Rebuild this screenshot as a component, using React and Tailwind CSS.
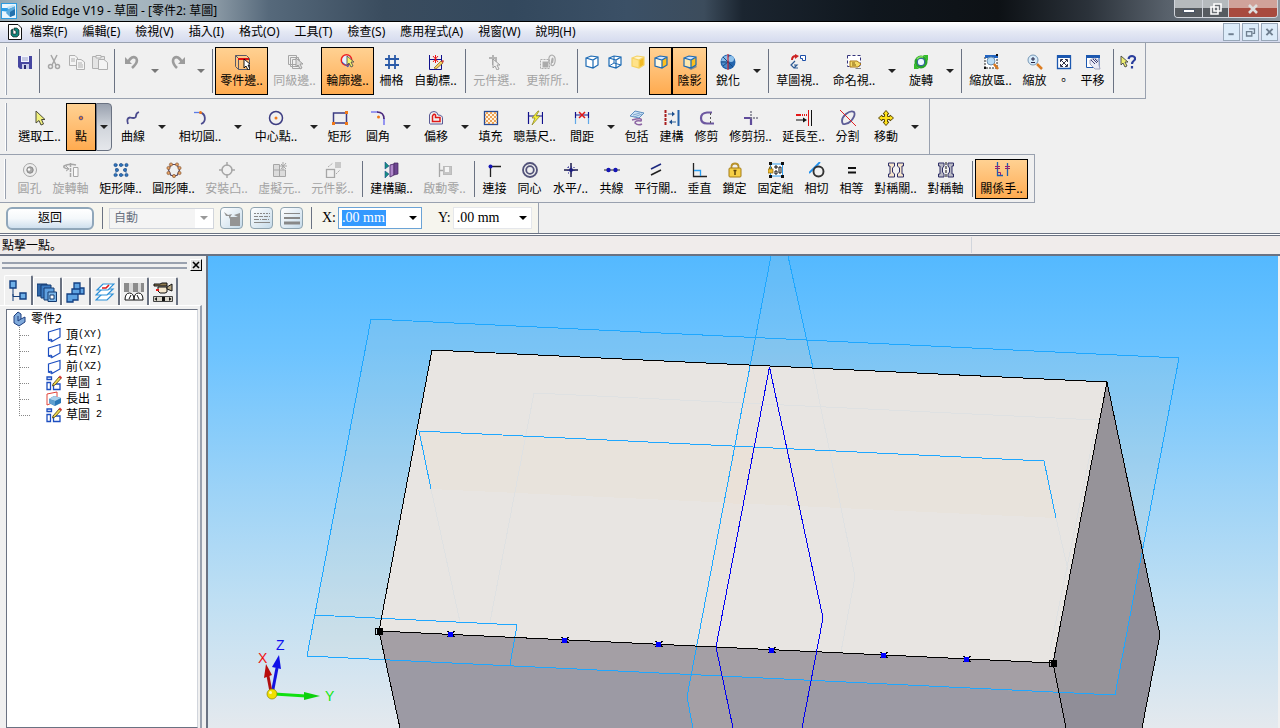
import { useState } from 'react';

const GRAY = '#a6a6a6';
const NAVY = '#10108c';
const BLUE = '#1f5fae';

const CubeIcon = ({ front = '#fff', side = '#fff', top = '#fff', stroke = '#1c6ab4', hidden = false, shadow = false }) => (
  <>
    {shadow && <path d="M1 11 L9 16 L15 13 L13 10Z" fill="#8a8a8a" />}
    <path d="M2 4 L9 6 L9 14 L2 12Z" fill={front} />
    <path d="M9 6 L14 3 L14 11 L9 14Z" fill={side} />
    <path d="M2 4 L7 2 L14 3 L9 6Z" fill={top} />
    <path d="M2 4 L7 2 L14 3 L14 11 L9 14 L2 12Z M2 4 L9 6 L14 3 M9 6 V14" fill="none" stroke={stroke} strokeWidth="1.2" />
    {hidden && <path d="M7 2 V9 L2 12 M7 9 L14 11" fill="none" stroke={stroke} />}
  </>
);

const Cursor = ({ x = 0, y = 0, fill = '#fff', stroke = '#000' }) => (
  <path
    d={`M${x} ${y} v9 l2 -2 l2 4 l2 -1 l-2 -4 h3Z`}
    fill={fill}
    stroke={stroke}
    strokeWidth="0.9"
  />
);

const icons = {
  save: (
    <>
      <path d="M1 2 H15 V15 H3 L1 13Z" fill="#4646a0" />
      <path d="M4 2 H12 V8 H4Z" fill="#f2f4ff" />
      <path d="M5 4 H11 M5 6 H11" stroke="#9aa0c8" />
      <path d="M5 10 H12 V15 H5Z" fill="#c8cce8" />
      <path d="M7 11 H9 V15 H7Z" fill="#28286e" />
    </>
  ),
  cut: (
    <g fill="none" stroke={GRAY} strokeWidth="1.5">
      <path d="M5 1 L10 11 M11 1 L6 11" />
      <circle cx="4.5" cy="12.500" r="2" />
      <circle cx="11.500" cy="12.500" r="2" />
    </g>
  ),
  copy: (
    <g fill="#f4f4f4" stroke="#b0b0b0">
      <path d="M0.500 1.500 H6 L8.500 4 V11.500 H0.500Z" />
      <path d="M7.500 5.500 H12 L15.500 8 V15.500 H7.500Z" />
      <path d="M2 5 H6 M2 7 H6 M9 9 H13 M9 11 H14 M9 13 H14" />
    </g>
  ),
  paste: (
    <g fill="#f4f4f4" stroke="#b0b0b0">
      <path d="M0.500 2.500 H12.500 V14.500 H0.500Z" fill="#e4e4e4" />
      <path d="M4 1.500 H9 V4 H4Z" />
      <path d="M6.500 5.500 H12 L15.500 8.500 V15.500 H6.500Z" />
    </g>
  ),
  undo: (
    <>
      <path d="M4 8 Q8 1 12 4 Q15 8 8 14" fill="none" stroke="#9c9c9c" strokeWidth="2.600" />
      <path d="M1 3 V10 H8Z" fill="#9c9c9c" />
    </>
  ),
  redo: (
    <>
      <path d="M12 8 Q8 1 4 4 Q1 8 7 14" fill="none" stroke="#9c9c9c" strokeWidth="2.600" />
      <path d="M15 3 V10 H8Z" fill="#9c9c9c" />
    </>
  ),
  partEdge: (
    <>
      <path d="M1.500 1.500 H12.500 L15.500 4.500 V15.500 H4.500 L1.500 12.500Z M4.500 4.500 V15.500 M1.500 1.500 L4.500 4.500" fill="none" stroke="#5a5a66" />
      <path d="M4 5 H15" stroke="#e01010" strokeWidth="2" />
      <Cursor x={10} y={5} />
    </>
  ),
  peerEdge: (
    <g fill="none" stroke={GRAY}>
      <path d="M1.500 1.500 H9.500 V10.500 H1.500Z M3.500 3.500 H11.500 V12.500 H3.500Z M5.500 5.500 H12.500 V14.500 H5.500Z" />
      <Cursor x={9} y={4} fill="#ddd" stroke="#999" />
    </g>
  ),
  profileEdge: (
    <>
      <circle cx="6.500" cy="6" r="5.200" fill="#e6f2ff" stroke="#e22" strokeWidth="1.500" />
      <path d="M2 8 L8 13 L9 5" fill="none" stroke="#3858b8" />
      <Cursor x={7} y={2} fill="#f3f36a" stroke="#555" />
    </>
  ),
  grid: <path d="M5 1 V15 M11 1 V15 M1 5 H15 M1 11 H15" stroke="#2a5aa8" strokeWidth="1.800" />,
  autoDim: (
    <>
      <path d="M1.500 1 V15.500 H13.500 V1 M1 5.500 H14" fill="none" stroke={NAVY} />
      <path d="M5 2 L10 8 M10 2 L5 8 M7.500 1 V9" stroke="#e11" />
      <path d="M6 14 L13 7 L15 9 L8 15Z" fill="#f5cf62" stroke="#7b5514" strokeWidth="0.700" />
      <path d="M13 7 l2 2 l1 -2 l-1 -1Z" fill="#d23c3c" />
    </>
  ),
  pickPart: (
    <>
      <path d="M6 1 V11 M2 4 H10 M9 3 V8" fill="none" stroke="#b4b4b4" strokeWidth="2" />
      <Cursor x={6} y={5} fill="#eee" stroke="#999" />
    </>
  ),
  refresh: (
    <g fill="none" stroke="#adadad">
      <path d="M0.500 5.500 H9.500 V14.500 H0.500Z" strokeDasharray="2 1" />
      <rect x="3" y="8" width="5" height="5" fill="#aaa" />
      <path d="M9 9 Q8 1 12 1 Q16 2 15 8 Q14 13 11 11 L12 5 Q13 3 13 6 L12.500 9" strokeWidth="1.200" />
    </g>
  ),
  cubeWire: <CubeIcon />,
  cubeHidden: <CubeIcon hidden />,
  cubeShade: <CubeIcon front="#ffe28a" side="#f2ba26" top="#fff4cc" stroke="#f5d263" />,
  cubeEdge: <CubeIcon front="#fff7e0" side="#ffbf1c" top="#d5e8ff" />,
  cubeShadow: <CubeIcon front="#fbe7b0" side="#ffbf1c" top="#cfe4ff" shadow />,
  sharpen: (
    <>
      <circle cx="8" cy="8" r="7.500" fill="#2465ae" />
      <circle cx="11" cy="5" r="3" fill="#8fc2ec" />
      <path d="M8 1 L3 3 L1 7 L8 8Z" fill="#8bbce8" />
      <path d="M1 7 L8 8 V15 L3 12Z" fill="#4f8cc8" />
      <path d="M3 3 L8 8 M1 8 H8 L3 12 M8 8 L13 13" stroke="#174b86" fill="none" />
      <path d="M8 0 V16" stroke="#e01515" />
    </>
  ),
  sketchView: (
    <>
      <path d="M2 6 Q2 2 6 2" fill="none" stroke="#c22" strokeWidth="2" />
      <path d="M5 0 L9 2 L5 5Z" fill="#c22" />
      <path d="M10.500 1.500 H15.500 V6.500 H12.500 V4.500 H10.500Z" fill="#fff" stroke="#1c4ea8" />
      <path d="M5 7 L1 11 L4 14 L7 11 L4 11 M4 14 H8" fill="none" stroke="#2c5a94" strokeWidth="1.200" />
    </>
  ),
  namedView: (
    <>
      <path d="M1.500 1.500 H14.500 V12.500 H1.500Z" fill="#fff" stroke="#33337c" strokeDasharray="3 2" />
      <path d="M4 7 H11 L15 10 L12 13 H4Z" fill="#f5dc68" stroke="#a6741b" />
      <path d="M6 9 H9 M6 11 H10" stroke="#805a10" />
      <path d="M10 14 H15 V15 H9Z" fill="#888" />
    </>
  ),
  rotate: (
    <>
      <circle cx="8" cy="8" r="5" fill="#eef8ff" stroke="#2aa52c" strokeWidth="3" />
      <circle cx="8" cy="8" r="3.800" fill="#eef8ff" stroke="#1b5596" />
      <path d="M10 1 L15 1 L15 7Z M6 15 L1 15 L1 9Z" fill="#35bc2c" />
      <path d="M4 5 Q6 2 10 3" fill="none" stroke="#84e35e" strokeWidth="1.500" />
    </>
  ),
  zoomArea: (
    <>
      <path d="M2 3 V14 H14 V3" fill="#fff" stroke="#222" strokeDasharray="2 1" />
      <path d="M2 1 H15 V4 H2Z" fill="#2264c0" />
      <circle cx="8" cy="7" r="4" fill="#b9dcf6" stroke="#6d8fae" />
      <path d="M11 10 L15 15" stroke="#d9781e" strokeWidth="2.500" />
      <path d="M1 13 H3 V15 H1Z M13 0 H15 V2 H13Z" fill="#111" />
    </>
  ),
  zoom: (
    <>
      <circle cx="6" cy="6" r="5" fill="#d8ecfb" stroke="#7697b5" />
      <path d="M4 5 H8 M6 3 V7 M4 8.500 H8" stroke="#224" />
      <path d="M10 10 L15 15" stroke="#dc7d22" strokeWidth="2.500" />
    </>
  ),
  fit: (
    <>
      <path d="M1.500 2 H14.500 V14.500 H1.500Z" fill="#fff" stroke="#1c58b0" strokeWidth="1.300" />
      <path d="M1 1 H15 V4 H1Z" fill="#1c58b0" />
      <path d="M5 6 L11 12 M11 6 L5 12 M4.500 8 V5.500 H7 M9 5.500 H11.500 V8 M4.500 10 V12.500 H7 M9 12.500 H11.500 V10" fill="none" stroke="#33334a" />
    </>
  ),
  pan: (
    <>
      <path d="M1.500 1.500 H14 V13.500 H1.500Z" fill="#fff" stroke="#1c58b0" />
      <path d="M1 1 H15 V4 H1Z" fill="#1c58b0" />
      <path d="M5 6 L7 5 L10 4 L14 7 L14 11 L15 15 H10 L5 10Z" fill="#e9eaf6" stroke="#8f93b4" strokeWidth="0.800" />
      <path d="M6 6 L10 10 M8 5 L12 9 M10 5 L13 8" stroke="#3d4075" />
    </>
  ),
  help: (
    <>
      <Cursor x={1} y={2} fill="#eeee70" stroke="#444" />
      <path d="M8.500 5 Q9 2 12 2 Q15.500 2.500 15 5.500 Q12 8 12 10 M12 12 V14.500" fill="none" stroke="#2a3e9c" strokeWidth="2.200" />
    </>
  ),
  select: <path d="M4 1 V13 L7 10.500 L9 15 L11.500 14 L9.500 9.500 H13Z" fill="#f0f07c" stroke="#4a4a3a" />,
  point: <circle cx="8" cy="8" r="1.800" fill="#e8772c" stroke="#54548c" />,
  curve: <path d="M3 14 Q1 8 5 7.500 Q11 9 11 6 Q11 3 14 2" fill="none" stroke="#4b4b8e" strokeWidth="1.800" />,
  tangentArc: (
    <>
      <path d="M2 2.500 H9" stroke="#5b7be6" strokeWidth="1.300" />
      <path d="M8 2.500 A6 6 0 0 1 9 14" fill="none" stroke="#4b4b8e" strokeWidth="1.800" />
      <circle cx="8.500" cy="2.500" r="1.500" fill="#f07818" />
    </>
  ),
  circle: (
    <>
      <circle cx="8" cy="8" r="6.500" fill="none" stroke="#3d3d82" strokeWidth="1.500" />
      <circle cx="8" cy="8" r="1.500" fill="#f07818" />
    </>
  ),
  rect: (
    <>
      <rect x="1.500" y="3" width="13" height="10" fill="none" stroke="#3d3d82" strokeWidth="1.500" />
      <path d="M0 12 h3 v3 h-3Z M13 12 h3 v3 h-3Z M13 1 h3 v3 h-3Z" fill="#f07818" />
    </>
  ),
  fillet: (
    <>
      <path d="M1 2 H8 M14 8 V15" stroke="#7d7df0" strokeWidth="1.600" />
      <path d="M7 2 Q14 2 14 9" fill="none" stroke="#4b2a7e" strokeWidth="1.600" />
      <circle cx="8.500" cy="7" r="1.500" fill="#f07818" />
    </>
  ),
  offset: (
    <g fill="none">
      <path d="M1.500 13.500 V5 Q2 1.500 6 1.500 Q9.500 1.500 10 5 Q15 5 14.500 9 V14 H2Z" stroke="#5a5a96" />
      <path d="M4.500 11.500 V6 Q6 3 7.500 5 V7.500 H12 V11.500Z" stroke="#e01818" strokeWidth="1.500" />
    </g>
  ),
  fill: (
    <>
      <rect x="1.500" y="1.500" width="13" height="13" fill="#fff3df" stroke="#284c96" strokeWidth="1.300" />
      <path d="M2 5 L5 2 M2 9 L9 2 M2 13 L13 2 M5 14 L14 5 M9 14 L14 9 M11 2 L14 5 M7 2 L14 9 M3 2 L14 13 M2 5 L11 14 M2 9 L7 14" stroke="#e99a48" strokeWidth="0.900" />
    </>
  ),
  smartDim: (
    <>
      <path d="M1.500 2 V14 M15.500 2 V14 M1 6 H16" stroke={NAVY} strokeWidth="1.200" />
      <path d="M11 1 L5 8 L8 8 L5 15 L13 6 L9 6 L12 1Z" fill="#f4ef3a" stroke="#85801d" strokeWidth="0.700" />
    </>
  ),
  distance: (
    <>
      <path d="M1.500 2 V8 M14.500 2 V8 M1 5 H15" stroke={NAVY} strokeWidth="1.200" />
      <path d="M1.500 8 V14 M14.500 8 V14" stroke="#60a8e8" strokeWidth="1.200" />
      <path d="M5 2 L11 8 M11 2 L5 8" stroke="#e11818" strokeWidth="1.500" />
    </>
  ),
  include: (
    <>
      <path d="M1 6 L6 1 L15 3 L10 8Z" fill="#cde2f5" stroke="#5d8fc0" />
      <path d="M4 5 L11 3 M5 7 L13 4" stroke="#7fa8d0" />
      <path d="M3 10 Q14 7 12 11 Q6 10 6 13 Q9 16 13 14" fill="none" stroke="#8d65a4" strokeWidth="1.500" />
    </>
  ),
  construct: (
    <>
      <path d="M1.500 0 V16" stroke="#a81e1e" strokeWidth="2" strokeDasharray="3 1" />
      <path d="M14.500 0 V16" stroke="#2462aa" strokeWidth="2" />
      <path d="M4 4 H9 M12 12 H7" stroke="#2a6098" />
      <path d="M8 1.500 L11 4 L8 6.500Z M8 9.500 L5 12 L8 14.500Z" fill="#1d4e8c" />
    </>
  ),
  trim: (
    <>
      <path d="M13 2.500 H8 Q2 3 2 8 Q2 13.500 8 13.500 H15" fill="none" stroke="#6d58a0" strokeWidth="2.200" />
      <path d="M11.500 3 V14" stroke="#555" strokeDasharray="2 2" />
    </>
  ),
  trimCorner: (
    <>
      <path d="M1 8 H8 V15" fill="none" stroke="#5f4b9a" strokeWidth="2.200" />
      <path d="M8 1 V8 H15" fill="none" stroke="#7b7b8a" strokeWidth="1.500" strokeDasharray="2 1" />
    </>
  ),
  extend: (
    <>
      <path d="M0 5 H5" stroke="#e51616" strokeWidth="2" />
      <path d="M6 5 H12" stroke="#e51616" strokeWidth="2" strokeDasharray="1 1" />
      <path d="M12.500 0 V16" stroke="#d11" />
      <path d="M15.500 0 V16 M0 10 H8" stroke="#111" />
      <path d="M7 7.500 L11 10 L7 12.500Z" fill="#111" />
    </>
  ),
  split: (
    <>
      <path d="M3 14 Q0 9 6 4 Q11 0 14 2 Q16 5 11 11 Q7 15 3 14Z" fill="none" stroke="#5d5d96" strokeWidth="1.800" />
      <path d="M0 0 L16 16" stroke="#e22222" />
    </>
  ),
  move: (
    <path
      d="M8 0.500 L11 4 H9.500 V6.500 H12 V5 L15.500 8 L12 11 V9.500 H9.500 V12 H11 L8 15.500 L5 12 H6.500 V9.500 H4 V11 L0.500 8 L4 5 V6.500 H6.500 V4 H5Z"
      fill="#ffe21d"
      stroke="#5e4a0a"
    />
  ),
  hole: (
    <>
      <circle cx="8" cy="8" r="6.500" fill="#efefef" stroke={GRAY} />
      <circle cx="8" cy="8" r="3.200" fill="#aaa" stroke="#888" />
      <circle cx="7" cy="7.500" r="1.200" fill="#fff" />
    </>
  ),
  axis: (
    <g fill="none" stroke={GRAY}>
      <path d="M7.500 1 V16" strokeDasharray="4 1" strokeWidth="1.500" />
      <path d="M5 7 Q0 6 1 4 Q6 1 13 3" strokeWidth="1.500" />
      <path d="M10.500 5.500 H15 V14.500 H10.500Z" fill="#f8f8f8" />
      <path d="M3 4 L6 7 L3 9" />
    </g>
  ),
  rectPattern: (
    <>
      <path d="M3 3 H13 M3 13 H13 M3 3 V13 M13 3 V13" stroke="#5b88bd" strokeDasharray="2 1" />
      {[[2.500, 3], [8, 3], [13.500, 3], [4, 8], [12, 8], [2.500, 13], [8, 13], [13.500, 13]].map(([x, y]) => (
        <circle key={`${x}-${y}`} cx={x} cy={y} r="1.600" fill="#2e74bd" stroke="#12427c" strokeWidth="0.600" />
      ))}
    </>
  ),
  circPattern: (
    <>
      <path d="M5 2.500 H11 L13.500 8 L11 13.500 H5 L2.500 8Z" fill="none" stroke="#554a6b" strokeWidth="1.200" />
      {[[5, 2.500], [11, 2.500], [2.500, 6], [13.500, 6], [2.500, 11], [13.500, 11], [8, 14]].map(([x, y]) => (
        <circle key={`${x}-${y}`} cx={x} cy={y} r="1.600" fill="#e5a163" stroke="#784622" strokeWidth="0.600" />
      ))}
    </>
  ),
  boss: (
    <g fill="none" stroke={GRAY} strokeWidth="1.500">
      <circle cx="8" cy="8" r="5" />
      <path d="M8 0 V4 M8 12 V16 M0 8 H4 M12 8 H16" />
    </g>
  ),
  virtual: (
    <g stroke={GRAY} fill="#dcdcdc">
      <path d="M1.500 2.500 H7.500 V8 H13.500 V14.500 H1.500Z M1.500 8 H7.500 V14" />
      <path d="M11 0 V8 M8 4 H15 M9 2 L14 7 M14 1 L9 7" />
    </g>
  ),
  compCopy: (
    <>
      <rect x="1.500" y="7.500" width="8" height="8" fill="none" stroke={GRAY} strokeWidth="1.300" />
      <rect x="10" y="0" width="6" height="6" fill="#c8c8c8" />
      <path d="M3 5 L8 1 M11 12 L15 8" stroke="#aaa" strokeDasharray="2 1" />
    </>
  ),
  buildShow: (
    <>
      <path d="M1 0 L5 4 L1 7Z M1 9 L5 12 L1 16Z" fill="#15907f" stroke="#1c4e90" strokeWidth="0.600" />
      <path d="M6 3 L10 2 V13 L6 15Z" fill="#b188cc" stroke="#5b3a78" />
      <path d="M10 1 H14 V12 L10 13Z" fill="#6d4591" stroke="#43275c" strokeWidth="0.700" />
    </>
  ),
  activate: (
    <>
      <path d="M2.500 1 V15 M3 8.500 H7" stroke={GRAY} strokeWidth="1.300" />
      <rect x="6.500" y="4.500" width="8" height="8" fill="#c5c5c5" stroke="#bbb" />
      <rect x="8" y="5" width="4" height="5" fill="#f5f5f5" />
    </>
  ),
  connect: (
    <>
      <path d="M3.500 15 V4.500 H14" fill="none" stroke="#222" strokeWidth="1.300" />
      <circle cx="3.500" cy="4.500" r="2" fill="#1515b5" />
    </>
  ),
  concentric: (
    <g fill="none" stroke="#53537a" strokeWidth="1.800">
      <circle cx="8" cy="8" r="7" />
      <circle cx="8" cy="8" r="3.800" />
    </g>
  ),
  horiz: (
    <>
      <path d="M1 8 H15 M8 1 V15" stroke="#1b1b4c" strokeWidth="1.500" />
      <path d="M5 5 V11 M11 5 V11 M5 5 H11 M5 11 H11" stroke="#1b1b8c" strokeDasharray="1 2" />
      <circle cx="8" cy="8" r="2" fill="#1d1d80" />
    </>
  ),
  collinear: (
    <>
      <path d="M0 8 H16" stroke="#222" />
      <circle cx="4.500" cy="8" r="2.200" fill="#1515b5" />
      <circle cx="11.500" cy="8" r="2.200" fill="#1515b5" />
    </>
  ),
  parallel: (
    <>
      <path d="M3 7 L13 2" stroke="#1e2a80" strokeWidth="1.600" />
      <path d="M3 13 L13 8" stroke="#222" strokeWidth="1.600" />
    </>
  ),
  perp: (
    <>
      <path d="M1.500 1 V14.500 H15" fill="none" stroke="#222" strokeWidth="1.300" />
      <path d="M2 8.500 H8.500 V14" fill="none" stroke="#2a9df0" strokeWidth="1.300" />
    </>
  ),
  lock: (
    <>
      <path d="M4.500 7 V4 Q5 1.500 8 1.500 Q11 1.500 11.500 4 V7" fill="none" stroke="#b8922c" strokeWidth="1.800" />
      <rect x="2" y="6" width="12" height="9" rx="1" fill="#f6cf45" stroke="#a47d18" />
      <path d="M6.500 8.500 H9.500 M8 8.500 V13" stroke="#5c430a" strokeWidth="1.500" />
    </>
  ),
  fixGroup: (
    <>
      <rect x="2.500" y="2" width="12" height="12" fill="#fff" stroke="#2a9df0" />
      <path d="M1 0 h3 v3 h-3Z M13 0 h3 v3 h-3Z M1 13 h3 v3 h-3Z M13 13 h3 v3 h-3Z" fill="#111" />
      <path d="M1.500 7 V5 Q2.500 3.500 3.500 5 V7" fill="none" stroke="#8c6a10" />
      <rect x="0" y="7" width="5" height="4" fill="#eebb30" stroke="#8c6a10" strokeWidth="0.700" />
      <path d="M7 4 h2 v2 h-2Z M11 5 h2 v6 h-2Z M7 9 h2 v3 h-2Z" fill="none" stroke="#111" />
    </>
  ),
  tangent: (
    <>
      <path d="M0 11 L11 0" stroke="#1c8fee" strokeWidth="1.800" />
      <circle cx="9.500" cy="9.500" r="5" fill="none" stroke="#333" strokeWidth="1.900" />
    </>
  ),
  equal: <path d="M4 6 H12 M4 10.500 H12" stroke="#111" strokeWidth="2.200" />,
  symmetric: (
    <path d="M0.500 1 H6.500 V4 L4.500 6 V10 L6.500 12 V15 H0.500 V12 H2 V4 H0.500Z M15.500 1 H9.500 V4 L11.500 6 V10 L9.500 12 V15 H15.500 V12 H14 V4 H15.500Z" fill="#f5e4cb" stroke="#2e2e66" />
  ),
  symAxis: (
    <>
      <path d="M0.500 1 H6 V4 L4.500 6 V10 L6 12 V15 H0.500 V12 H2 V4 H0.500Z M15.500 1 H10 V4 L11.500 6 V10 L10 12 V15 H15.500 V12 H14 V4 H15.500Z" fill="#b9b9c4" stroke="#2e2e66" />
      <path d="M8 0 V16" stroke="#111" strokeDasharray="3 1" />
    </>
  ),
  relation: (
    <>
      <path d="M3.500 0 V13.500 H9 M13.500 1 V14" fill="none" stroke={BLUE} strokeWidth="1.300" />
      <path d="M1 4.500 H6 M1 6.500 H6 M11 4.500 H16 M11 6.500 H16 M4 10.500 H6.500 V13" fill="none" stroke="#a01f6c" />
    </>
  ),
};

const Icon = ({ name }) => (
  <svg className="w-4 h-4 shrink-0" viewBox="0 0 16 16" aria-hidden="true">
    {icons[name]}
  </svg>
);

const widths = {
  xs: ['w-[23px]', 'w-[30px]'],
  sm: ['w-[35px]', 'w-[42px]'],
  md: ['w-[47px]', 'w-[54px]'],
  lg: ['w-[53px]', 'w-[60px]'],
};

const Arrow = ({ color = '#222' }) => (
  <svg className="w-2 h-1 shrink-0" viewBox="0 0 8 4" aria-hidden="true">
    <path d="M0 0 H8 L4 4Z" fill={color} />
  </svg>
);

const ToolButton = ({ item, compact }) => {
  const { icon, label, size, drop, off, on, pill } = item;
  const width = pill ? widths.xs[1] : widths[size][drop ? 1 : 0];
  return (
    <>
      <button
        type="button"
        disabled={off}
        aria-label={label || icon}
        aria-pressed={on ? true : undefined}
        className={`flex flex-col items-center gap-[3px] shrink-0 border whitespace-nowrap ${width} ${
          compact ? 'h-10 pt-0.5' : 'h-12 pt-1.5'
        } ${on ? 'border-black bg-linear-to-b from-[#ffd192] to-[#ffab4f]' : 'border-transparent'} ${
          off ? 'text-[#a3a3a3]' : 'text-black'
        }`}
      >
        <Icon name={icon} />
        {label && <span className="leading-4">{label}</span>}
      </button>
      {drop && (
        <button
          type="button"
          aria-label={`${label || icon} menu`}
          className={`flex items-center justify-center w-4 shrink-0 h-12 ${
            pill ? 'border border-gray-500 rounded-r-sm bg-linear-to-b from-gray-400 via-gray-300 to-gray-200' : ''
          }`}
        >
          <Arrow color={off ? '#777' : '#222'} />
        </button>
      )}
    </>
  );
};

const Separator = () => (
  <div className="w-1.5 shrink-0 self-stretch flex justify-center py-0.5">
    <div className="w-px bg-gray-500" />
  </div>
);

const Toolbar = ({ items, compact, className }) => (
  <div role="toolbar" className={`flex w-fit pt-1 pb-[3px] pr-1.5 border-r border-r-gray-400 ${className}`}>
    <div className="w-0.5 ml-1 mr-1.5 shrink-0 border-l border-white border-r border-r-gray-400" />
    {items.map((item, i) =>
      item === '|' ? <Separator key={i} /> : <ToolButton key={i} item={item} compact={compact} />
    )}
  </div>
);

const mainTools = [
  { icon: 'save', size: 'xs' },
  '|',
  { icon: 'cut', size: 'xs', off: true },
  { icon: 'copy', size: 'xs', off: true },
  { icon: 'paste', size: 'xs', off: true },
  '|',
  { icon: 'undo', size: 'xs', off: true, drop: true },
  { icon: 'redo', size: 'xs', off: true, drop: true },
  '|',
  { icon: 'partEdge', label: '零件邊..', size: 'lg', on: true },
  { icon: 'peerEdge', label: '同級邊..', size: 'lg', off: true },
  { icon: 'profileEdge', label: '輪廓邊..', size: 'lg', on: true },
  { icon: 'grid', label: '柵格', size: 'sm' },
  { icon: 'autoDim', label: '自動標..', size: 'lg' },
  '|',
  { icon: 'pickPart', label: '元件選..', size: 'lg', off: true },
  { icon: 'refresh', label: '更新所..', size: 'lg', off: true },
  '|',
  { icon: 'cubeWire', size: 'xs' },
  { icon: 'cubeHidden', size: 'xs' },
  { icon: 'cubeShade', size: 'xs' },
  { icon: 'cubeEdge', size: 'xs', on: true },
  { icon: 'cubeShadow', label: '陰影', size: 'sm', on: true },
  { icon: 'sharpen', label: '銳化', size: 'sm', drop: true },
  '|',
  { icon: 'sketchView', label: '草圖視..', size: 'lg' },
  { icon: 'namedView', label: '命名視..', size: 'lg', drop: true },
  { icon: 'rotate', label: '旋轉', size: 'sm', drop: true },
  '|',
  { icon: 'zoomArea', label: '縮放區..', size: 'lg' },
  { icon: 'zoom', label: '縮放', size: 'sm' },
  { icon: 'fit', label: '。', size: 'xs' },
  { icon: 'pan', label: '平移', size: 'sm' },
  '|',
  { icon: 'help', size: 'xs' },
];

const drawTools = [
  { icon: 'select', label: '選取工..', size: 'lg' },
  { icon: 'point', label: '點', size: 'xs', on: true, drop: true, pill: true },
  { icon: 'curve', label: '曲線', size: 'sm', drop: true },
  { icon: 'tangentArc', label: '相切圓..', size: 'lg', drop: true },
  { icon: 'circle', label: '中心點..', size: 'lg', drop: true },
  { icon: 'rect', label: '矩形', size: 'sm' },
  { icon: 'fillet', label: '圓角', size: 'sm', drop: true },
  { icon: 'offset', label: '偏移', size: 'sm', drop: true },
  { icon: 'fill', label: '填充', size: 'sm' },
  { icon: 'smartDim', label: '聰慧尺..', size: 'lg' },
  { icon: 'distance', label: '間距', size: 'sm', drop: true },
  { icon: 'include', label: '包括', size: 'sm' },
  { icon: 'construct', label: '建構', size: 'sm' },
  { icon: 'trim', label: '修剪', size: 'sm' },
  { icon: 'trimCorner', label: '修剪拐..', size: 'lg' },
  { icon: 'extend', label: '延長至..', size: 'lg' },
  { icon: 'split', label: '分割', size: 'sm' },
  { icon: 'move', label: '移動', size: 'sm', drop: true },
];

const relationTools = [
  { icon: 'hole', label: '圓孔', size: 'sm', off: true },
  { icon: 'axis', label: '旋轉軸', size: 'md', off: true },
  { icon: 'rectPattern', label: '矩形陣..', size: 'lg' },
  { icon: 'circPattern', label: '圓形陣..', size: 'lg' },
  { icon: 'boss', label: '安裝凸..', size: 'lg', off: true },
  { icon: 'virtual', label: '虛擬元..', size: 'lg', off: true },
  { icon: 'compCopy', label: '元件影..', size: 'lg', off: true },
  '|',
  { icon: 'buildShow', label: '建構顯..', size: 'lg' },
  { icon: 'activate', label: '啟動零..', size: 'lg', off: true },
  '|',
  { icon: 'connect', label: '連接', size: 'sm' },
  { icon: 'concentric', label: '同心', size: 'sm' },
  { icon: 'horiz', label: '水平/..', size: 'md' },
  { icon: 'collinear', label: '共線', size: 'sm' },
  { icon: 'parallel', label: '平行關..', size: 'lg' },
  { icon: 'perp', label: '垂直', size: 'sm' },
  { icon: 'lock', label: '鎖定', size: 'sm' },
  { icon: 'fixGroup', label: '固定組', size: 'md' },
  { icon: 'tangent', label: '相切', size: 'sm' },
  { icon: 'equal', label: '相等', size: 'sm' },
  { icon: 'symmetric', label: '對稱關..', size: 'lg' },
  { icon: 'symAxis', label: '對稱軸', size: 'md' },
  '|',
  { icon: 'relation', label: '關係手..', size: 'lg', on: true },
];

const menus = ['檔案(F)', '編輯(E)', '檢視(V)', '插入(I)', '格式(O)', '工具(T)', '檢查(S)', '應用程式(A)', '視窗(W)', '說明(H)'];

const TitleBar = () => (
  <header className="h-[22px] flex items-start justify-between border-b border-black bg-[linear-gradient(90deg,#8fa6b3_0%,#b4c4cc_4%,#a3b3bd_12%,#8897a3_17%,#56697b_21%,#3a4c5e_30%,#33485d_40%,#3b5066_49%,#3c4c5c_55%,#1b2530_58%,#10171e_68%,#0d1115_78%,#2b323a_85%,#57606a_91%,#8b959e_100%)]">
    <div className="flex items-center h-[21px] gap-1 pl-px">
      <svg className="w-4 h-4" viewBox="0 0 16 16" aria-hidden="true">
        <rect x="0.500" y="0.500" width="15" height="15" fill="#e9f5fd" stroke="#2c9be0" />
        <path d="M1 5 L7 5 L9 9 L1 8Z" fill="#2a9de8" />
        <path d="M7 6 L14 3 L14 12 L9 14 L5 10Z" fill="#5aa9dc" />
        <path d="M7 6 L14 3 L12 2 L6 4Z" fill="#b9e0f6" />
        <path d="M9 9 L14 6 V12 L9 14Z" fill="#2471ad" />
      </svg>
      <h1 className="text-xs leading-4 whitespace-nowrap">Solid Edge V19 - 草圖 - [零件2: 草圖]</h1>
    </div>
    <div className="flex h-[18px] mr-0.5 border border-t-0 border-gray-300 rounded-b overflow-hidden">
      <button type="button" aria-label="Minimize" className="w-7 flex items-center justify-center border-r border-gray-300 bg-linear-to-b from-[#b5babd] from-50% to-[#565b60] to-50%">
        <span className="w-3 h-1 mt-1 bg-white border border-gray-600" />
      </button>
      <button type="button" aria-label="Restore" className="w-[26px] flex items-center justify-center border-r border-gray-300 bg-linear-to-b from-[#b5babd] from-50% to-[#565b60] to-50%">
        <svg className="w-3 h-3" viewBox="0 0 12 12">
          <path d="M4 1 H11 V8 H4Z M1 4 H8 V11 H1Z" fill="#6b7075" stroke="#fff" strokeWidth="1.600" />
        </svg>
      </button>
      <button type="button" aria-label="Close" className="w-12 flex items-center justify-center bg-linear-to-b from-[#d0a29a] from-45% to-[#a84a3e] to-50%">
        <svg className="w-2.5 h-2.5" viewBox="0 0 10 10">
          <path d="M1 1 L9 9 M9 1 L1 9" stroke="#ddd" strokeWidth="2.600" />
        </svg>
      </button>
    </div>
  </header>
);

const MenuBar = () => (
  <nav className="flex items-center h-[21px] pl-2 border-b border-gray-400 bg-linear-to-b from-white via-[#e4e8f4] to-[#d5dbef]">
    <svg className="w-3.5 h-4 mr-2" viewBox="0 0 14 16" aria-hidden="true">
      <path d="M0.500 0.500 H10 L13.500 4 V15.500 H0.500Z" fill="#fff" stroke="#111" />
      <path d="M3 6 L5 5 V10 H8 V7 L6 6 V4 H9 L11 6 V11 L9 13 H5 L3 11Z" fill="#12867c" stroke="#111" strokeWidth="0.600" />
    </svg>
    <ul className="flex gap-[15px] grow">
      {menus.map((m) => (
        <li key={m}>
          <button type="button" className="whitespace-nowrap leading-4">{m}</button>
        </li>
      ))}
    </ul>
    <div className="flex gap-0.5 pr-0.5">
      {['M5 11 H11', 'M7 5 H13 V10 H11 M4 8 H10 V13 H4Z', 'M5 5 L12 12 M12 5 L5 12'].map((d, i) => (
        <button
          key={d}
          type="button"
          aria-label={['Minimize window', 'Restore window', 'Close window'][i]}
          className="w-[17px] h-[18px] border border-[#98a7b8] bg-[#dcebf9]"
        >
          <svg className="w-full h-full" viewBox="0 0 17 17">
            <path d={d} fill="none" stroke="#6f7f90" strokeWidth={i === 1 ? 1.500 : 2.200} />
          </svg>
        </button>
      ))}
    </div>
  </nav>
);

const styleButton = 'w-[23px] h-[22px] flex items-center justify-center rounded-sm border border-[#8fa3b0] bg-linear-to-br from-white to-[#c6dbea]';

const CoordInput = ({ id, label, selected }) => {
  const [value, setValue] = useState('.00 mm');
  return (
    <>
      <label htmlFor={id} className="text-sm leading-4 font-['Liberation_Serif',serif]">{label}</label>
      <div className={`flex items-center justify-between h-[22px] ml-0.5 pl-[3px] pr-1 border bg-white ${selected ? 'w-[84px] border-[#6ba3d6]' : 'w-[79px] border-gray-200'}`}>
        <input
          id={id}
          value={value}
          onChange={(e) => setValue(e.target.value)}
          className={`w-11 h-4 text-sm leading-4 outline-none font-['Liberation_Serif',serif] ${selected ? 'bg-[#3399ff] text-white' : 'text-black'}`}
        />
        <button type="button" aria-label={`${label} values`}><Arrow color="#000" /></button>
      </div>
    </>
  );
};

const Ribbon = () => (
  <div className="flex items-center w-[539px] h-[30px] pl-1.5 border-r border-gray-400 bg-[#f6f5ee]">
    <button type="button" className="w-[88px] h-[23px] rounded-md border-2 border-[#90a7ba] bg-linear-to-b from-white via-[#f4f8fb] to-[#cfe0ee] leading-4">
      返回
    </button>
    <div className="w-px h-[22px] ml-2 mr-1.5 bg-gray-500" />
    <div className="relative w-[105px]">
      <select aria-label="Color" disabled className="w-full h-[21px] pl-1 pr-4 appearance-none border border-gray-300 bg-[#f4f4f4] text-gray-500 leading-4">
        <option>自動</option>
      </select>
      <div className="absolute right-px top-px bottom-px w-[18px] flex items-center justify-center bg-white pointer-events-none">
        <Arrow color="#999" />
      </div>
    </div>
    <div className="flex gap-[7px] ml-1.5">
      <button type="button" aria-label="Fill color" className={styleButton}>
        <svg className="w-4 h-4" viewBox="0 0 16 16">
          <path d="M6 7 H16 V16 H6Z M10 5 L16 3 V8Z M0 2 L2 6 H5 V9 L8 4 L4 5Z" fill="#949494" />
        </svg>
      </button>
      <button type="button" aria-label="Line type" className={styleButton}>
        <svg className="w-4 h-4" viewBox="0 0 16 16">
          <path d="M0 3.500 H16" stroke="#888" strokeDasharray="2 1" />
          <path d="M0 6.500 H16" stroke="#888" strokeDasharray="4 1" />
          <path d="M0 9.500 H16" stroke="#888" strokeDasharray="5 1 1 1" />
          <path d="M0 12.500 H16" stroke="#888" />
        </svg>
      </button>
      <button type="button" aria-label="Line width" className={styleButton}>
        <svg className="w-4 h-4" viewBox="0 0 16 16">
          <path d="M0 3.500 H16" stroke="#888" />
          <path d="M0 8 H16" stroke="#888" strokeWidth="2" />
          <path d="M0 13 H16" stroke="#888" strokeWidth="3" />
        </svg>
      </button>
    </div>
    <div className="w-px h-[22px] ml-2 mr-2.5 bg-gray-500" />
    <CoordInput id="coord-x" label="X:" selected />
    <div className="w-4" />
    <CoordInput id="coord-y" label="Y:" />
  </div>
);

const planeIcon = <path d="M2.500 5 L14 1.500 V10 L6 14.500 Q6 11 2.500 13Z M2.500 13 L6 14.500" fill="#fff" stroke="#1c4ec0" strokeWidth="1.200" />;

const sketchIcon = (
  <>
    <path d="M1 2 H5.500 V4.500 H1Z M1 7.500 H4.500 V14.500 H1Z M7.500 9 H14 V14.500 H7.500Z" fill="#fff" stroke="#1c4ec0" strokeWidth="1.300" />
    <path d="M7 9 L13 2 L15 3.500 L9 10 L6.500 11Z" fill="#f0da50" stroke="#4f3e0b" strokeWidth="0.800" />
    <path d="M12.500 2 L14 0.500 L16 2.500 L15 4Z" fill="#d63838" />
  </>
);

const extrudeIcon = (
  <>
    <path d="M1 3 L11 1 V10 L1 14Z" fill="#fff" stroke="#e0443a" />
    <path d="M3 8 L8 5 L15 7 L15 12 L9 15 L3 12Z" fill="#2b78b8" />
    <path d="M3 8 L8 5 L15 7 L9 10Z" fill="#a9cfea" />
    <path d="M3 8 L9 10 V15 L3 12Z" fill="#5f9fd0" />
  </>
);

const tree = [
  { name: '頂', suffix: '(XY)', icon: planeIcon },
  { name: '右', suffix: '(YZ)', icon: planeIcon },
  { name: '前', suffix: '(XZ)', icon: planeIcon },
  { name: '草圖', suffix: '1', icon: sketchIcon },
  { name: '長出', suffix: '1', icon: extrudeIcon },
  { name: '草圖', suffix: '2', icon: sketchIcon },
];

const panelTabs = [
  {
    name: 'Pathfinder',
    art: (
      <>
        <path d="M5 8 V16.500 H13 M5 14 V21" fill="none" stroke="#173f78" />
        <path d="M2 1 H8 V8 H2Z M12 13 H18 V19 H12Z" fill="#6fb0e8" stroke="#123f82" strokeWidth="1.400" />
      </>
    ),
  },
  {
    name: 'Library',
    art: (
      <>
        <path d="M0 2 H10 V14 H0Z" fill="#2f66a8" stroke="#143a70" />
        <path d="M4 3 H14 V16 H4Z" fill="#3c7cc4" stroke="#143a70" />
        <path d="M7 6 H17 V18 H7Z" fill="#5fa0e0" stroke="#143a70" />
        <path d="M11 10 H19.500 V19.500 H11Z" fill="#7db6e8" stroke="#143a70" />
        <path d="M13 13 H17 V17 H13Z" fill="#fff" stroke="#143a70" />
      </>
    ),
  },
  {
    name: 'Family',
    art: (
      <path d="M8 1 H14 V6 H18 V12 H12 V18 H7 V20 H1 V12 H6 V7 H8Z M8 7 H14 V12 M6 12 H12" fill="#5fa3e2" stroke="#123f82" strokeWidth="1.300" />
    ),
  },
  {
    name: 'Layers',
    art: (
      <g fill="#fff" stroke="#2a8fd8" strokeWidth="1.200">
        <path d="M1 18 L7 12 H18 L12 18Z" />
        <path d="M1 13 L7 7 H18 L12 13Z" />
        <path d="M2 8 L8 2 H19 L13 8Z" />
        <path d="M7 6 L11 6 L14 3" fill="none" stroke="#e01818" strokeWidth="1.600" />
      </g>
    ),
  },
  {
    name: 'Sensors',
    art: (
      <>
        <path d="M0 1 H20 V10 H0Z" fill="#8b8b8b" />
        <path d="M5 1 H9 V10 H5Z M14 1 H17 V10 H14Z" fill="#d8d8d8" />
        <path d="M1 18 Q1 11 5.500 11 Q10 11 10 18Z M10 18 Q10 11 14.500 11 Q19 11 19 18Z" fill="#fff" stroke="#111" />
        <path d="M5 17 L7 13 M15 17 L13 13" stroke="#111" />
      </>
    ),
  },
  {
    name: 'Playback',
    art: (
      <>
        <path d="M5 5 H14 V10 L12 11 H7 L5 9Z" fill="#f3e6cc" stroke="#111" />
        <path d="M1 2 H7 L9 1 H14 V4 H1Z" fill="#8e7a50" stroke="#111" />
        <path d="M14 5 L19 2 V9 L14 7Z" fill="#b9a985" stroke="#111" />
        <path d="M3 8 H6" stroke="#e01818" strokeWidth="2" />
        <path d="M0.500 14.500 H19.500 V19.500 H0.500Z" fill="#d9d5c9" stroke="#444" />
        <path d="M4 15 V19 L1.500 17Z M16 15 V19 L18.500 17Z M9 15 H12 V19 H9Z" fill="#111" />
      </>
    ),
  },
];

const SidePanel = () => (
  <aside className="flex flex-col w-[208px] shrink-0 bg-[#f0f0f0] border-r-2 border-gray-500">
    <div className="flex items-center gap-[3px] h-[18px] pl-0.5 pr-1">
      <div className="grow h-[7px] border-y-2 border-gray-400 border-double" />
      <button type="button" aria-label="Close panel" className="w-3 h-3 flex items-center justify-center border border-white border-r-black border-b-black bg-[#e0e0e0]">
        <svg className="w-2 h-2" viewBox="0 0 8 8">
          <path d="M1 1 L7 7 M7 1 L1 7" stroke="#000" strokeWidth="1.600" />
        </svg>
      </button>
    </div>
    <div role="tablist" className="flex items-end h-[31px] pl-1">
      {panelTabs.map((tab, i) => (
        <button
          key={tab.name}
          type="button"
          role="tab"
          aria-label={tab.name}
          aria-selected={i === 0}
          className={`flex justify-center pt-1 w-[29px] rounded-t-xs border-t border-l border-white border-r-2 border-r-gray-500 ${i === 0 ? 'h-[30px]' : 'h-7'}`}
        >
          <svg className="w-5 h-[22px]" viewBox="0 0 20 22">{tab.art}</svg>
        </button>
      ))}
    </div>
    <div className="grow flex pt-[3px] pl-1.5 pr-0.5 mr-1 border-t border-t-white border-r-2 border-r-gray-400">
      <div className="grow bg-white border border-gray-500 border-r-gray-300 pl-1.5 pt-px">
        <div className="flex items-center gap-1 h-4">
          <svg className="w-3.5 h-4" viewBox="0 0 14 16">
            <path d="M1 5 L5 1 L8 3 V8 L12 6 V11 L6 15 L1 12Z" fill="#7fa9da" stroke="#1e3f80" />
            <path d="M5 5 V10 L8 8" fill="none" stroke="#1e3f80" />
          </svg>
          <span className="leading-4">零件2</span>
        </div>
        <ul className="ml-[5px]">
          {tree.map((node, i) => (
            <li key={node.name + node.suffix} className="flex items-center h-4">
              <span className="w-3 h-4 shrink-0">
                <svg className="w-3 h-4" viewBox="0 0 12 16" shapeRendering="crispEdges">
                  <path d={i === tree.length - 1 ? 'M1.500 0 V8.500 H12' : 'M1.500 0 V16 M1.500 8.500 H12'} fill="none" stroke="#888" strokeDasharray="1 1" />
                </svg>
              </span>
              <svg className="w-4 h-4 ml-4 mr-1" viewBox="0 0 16 16">{node.icon}</svg>
              <span className="leading-4">{node.name}</span>
              <span className={`text-[10px] leading-4 font-['Liberation_Mono',monospace] ${i < 3 ? '' : 'ml-1.5'}`}>{node.suffix}</span>
            </li>
          ))}
        </ul>
      </div>
    </div>
  </aside>
);

const sketchPoints = [[451, 634], [565, 640], [659, 644], [772, 650], [884, 655], [967, 659]];

const Viewport = () => (
  <main className="flex grow min-w-0 mr-0.5 overflow-hidden bg-[linear-gradient(180deg,#54b9ff_0%,#6cc3ff_20%,#9dd3f7_50%,#bfdff3_73%,#e4e9ee_100%)]">
    <svg className="w-full h-full" viewBox="208 256 1070 472" preserveAspectRatio="xMidYMid slice">
      <g shapeRendering="crispEdges" fill="none">
        {/* reference planes behind the solid */}
        <path d="M371 319 L1179 358 L1115 695 L307 656Z" fill="#d7caba" fillOpacity="0.14" />
        <path d="M771 256 L788 256 L813 369 L750 366Z" fill="#d7caba" fillOpacity="0.1" />

        {/* solid */}
        <path d="M432 350 L1107 382 L1053 663 L379 631Z" fill="#e8e5e2" />
        <path d="M1107 382 L1160 635 L1142 728 L1066 728 L1053 663Z" fill="#908e98" />
        <path d="M1107 382 L1143 548 L1115 695 L1059 693 L1053 663Z" fill="#969399" />
        <path d="M379 631 L1053 663 L1066 728 L400 728Z" fill="#9c9aa4" />
        <path d="M379 631 L1053 663 L1059 693 L385 660Z" fill="#a49fa5" />

        {/* planes over the solid */}
        <path d="M419 431 L1044 461 L1056 518 L431 489Z" fill="#e8e3dc" />
        <path d="M750 366 L769 367 L716 647 L697 646Z" fill="#e9e3de" />
        <path d="M735 446 L754 447 L742 504 L724 503Z" fill="#eae1d8" />
        <path d="M697 646 L716 647 L733 728 L693 728 L687 700Z" fill="#a49fa5" />
        <path d="M431 489 L460 622 M534 393 L1097 420 L1050 650 M534 393 L490 622 M813 369 L855 577 L841 652 M1056 518 L1068 570" stroke="#dfe1e2" />
        <path d="M371 319 L1179 358 L1115 695 L307 656Z" stroke="#1ea7ff" />
        <path d="M431 489 L419 431 L1044 461 L1056 518" stroke="#1ea7ff" />
        <path d="M771 256 L687 697 L693 728 M788 256 L813 368" stroke="#1ea7ff" />
        <path d="M314 615 L517 625 L510 665" stroke="#1ea7ff" />

        {/* edges */}
        <path d="M432 350 L1107 382 L1053 663 L379 631Z M379 631 L400 728 M1053 663 L1066 728 M1107 382 L1160 635 L1142 728" stroke="#000" />
        <path d="M733 728 L716 647 L769.500 367 L823 618 L802 728" stroke="#0000f0" />

        {sketchPoints.map(([x, y]) => (
          <g key={x}>
            <path d={`M${x - 4} ${y - 3} L${x + 4} ${y + 3} M${x + 4} ${y - 3} L${x - 4} ${y + 3}`} stroke="#000" />
            <rect x={x - 3} y={y - 2} width="5" height="5" fill="#0000ff" />
          </g>
        ))}
        {[[379, 631], [1053, 663]].map(([x, y]) => (
          <g key={x}>
            <rect x={x - 2} y={y - 3} width="6" height="6" fill="#000" />
            <rect x={x - 4} y={y - 3} width="7" height="6" stroke="#000" />
          </g>
        ))}
      </g>

      {/* axis triad */}
      <path d="M272 694 L277 668" stroke="#1212e0" strokeWidth="3" />
      <path d="M279 655 L281 669 L272 667Z" fill="#1010e8" />
      <path d="M271 692 L268 676" stroke="#b01010" strokeWidth="3" />
      <path d="M266 664 L272 675 L264 678Z" fill="#b80c0c" />
      <path d="M274 694 L306 696" stroke="#10e010" strokeWidth="3" />
      <path d="M304 692 L320 696 L304 700Z" fill="#0cd00c" />
      <circle cx="272" cy="694" r="5" fill="#f0e000" stroke="#8c8200" strokeWidth="0.700" />
      <circle cx="270.500" cy="692.500" r="1.500" fill="#fffbb0" />
      <g className="font-['Liberation_Sans',sans-serif] text-sm">
        <text x="258" y="663" fill="#f01010">X</text>
        <text x="276" y="650" fill="#1010f0">Z</text>
        <text x="325" y="701" fill="#10e810">Y</text>
      </g>
    </svg>
  </main>
);

const App = () => (
  <div className="flex flex-col h-screen overflow-hidden bg-[#f0f0f0] text-xs text-black font-['Noto_Sans','Noto_Sans_CJK_TC',sans-serif]">
    <TitleBar />
    <MenuBar />
    <Toolbar items={mainTools} className="pl-px border-b border-b-gray-400" />
    <Toolbar items={drawTools} className="pl-px" />
    <Toolbar items={relationTools} compact className="border-y border-y-gray-400" />
    <Ribbon />
    <div className="h-[3px] shrink-0 border-y border-gray-500 bg-white" />
    <div className="flex items-center h-[18px] shrink-0 bg-[#f0eceb]">
      <p className="grow pl-0.5 leading-4 font-['Noto_Sans_CJK_JP',sans-serif]">點擊一點。</p>
      <div className="w-[309px] h-4 border-l border-gray-300" />
    </div>
    <div className="grow flex min-h-0 border-t-2 border-gray-500">
      <SidePanel />
      <Viewport />
    </div>
  </div>
);

export default App;
